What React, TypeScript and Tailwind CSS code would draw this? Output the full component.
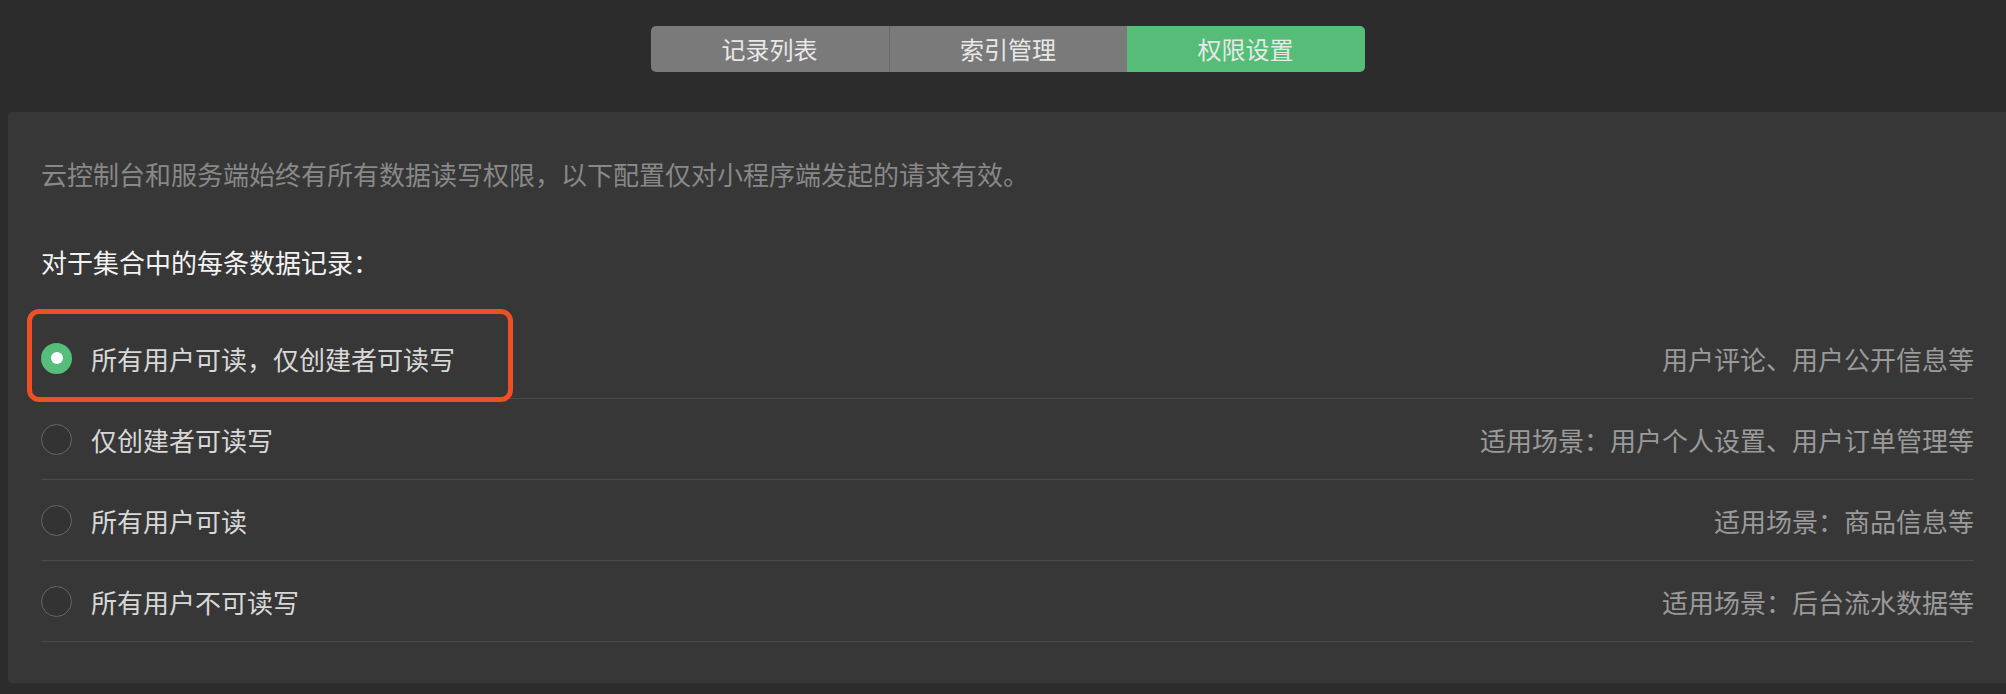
import React from 'react'

const tabs = [
  { label: '记录列表', active: false },
  { label: '索引管理', active: false },
  { label: '权限设置', active: true },
]

const options = [
  { label: '所有用户可读，仅创建者可读写', hint: '用户评论、用户公开信息等', checked: true },
  { label: '仅创建者可读写', hint: '适用场景：用户个人设置、用户订单管理等', checked: false },
  { label: '所有用户可读', hint: '适用场景：商品信息等', checked: false },
  { label: '所有用户不可读写', hint: '适用场景：后台流水数据等', checked: false },
]

function Radio({ checked }: { checked: boolean }) {
  if (checked) {
    return (
      <span className="flex h-[31px] w-[31px] shrink-0 items-center justify-center rounded-full bg-[#56bd7b]">
        <span className="h-[12px] w-[12px] rounded-full bg-white" />
      </span>
    )
  }
  return <span className="h-[31px] w-[31px] shrink-0 rounded-full border-[1.5px] border-[#666666] bg-[#333333]" />
}

export default function App() {
  return (
    <div
      className="flex h-[694px] w-full flex-col overflow-hidden bg-[#2c2c2c]"
      style={{ fontFamily: '"Noto Sans CJK SC", "Noto Sans", sans-serif' }}
    >
      {/* tab switcher */}
      <div className="flex justify-center pl-[9px] pt-[26px]">
        <div className="flex h-[46px] overflow-hidden rounded-[5px]">
          {tabs.map((t, i) => (
            <div
              key={t.label}
              className={
                'flex w-[238px] items-center justify-center text-[24px] text-[#e8e8e8] ' +
                (t.active ? 'bg-[#56bd79]' : 'bg-[#7a7a7a]') +
                (i > 0 && !t.active ? ' border-l border-[#686868]' : '')
              }
            >
              {t.label}
            </div>
          ))}
        </div>
      </div>

      {/* panel */}
      <div className="ml-[8px] mt-[40px] rounded-l-[4px] bg-[#373737] pb-[41px] pl-[33px] pr-[32px] pt-[44px]">
        <p className="text-[26px] leading-[36px] text-[#888888]">
          云控制台和服务端始终有所有数据读写权限，以下配置仅对小程序端发起的请求有效。
        </p>
        <p className="mt-[52px] text-[26px] leading-[36px] text-[#f2f2f2]">对于集合中的每条数据记录：</p>

        <div className="mt-[38px]">
          {options.map((o) => (
            <div
              key={o.label}
              className="relative flex h-[81px] items-center justify-between border-b border-[#4a4a4a]"
            >
              <div className="flex items-center gap-[19px]">
                <Radio checked={o.checked} />
                <span className="text-[26px] text-[#d8d8d8]">{o.label}</span>
              </div>
              <span className="text-[26px] text-[#9a9a9a]">{o.hint}</span>
              {o.checked && (
                <div className="pointer-events-none absolute left-[-14px] top-[-9px] h-[93px] w-[486px] rounded-[12px] border-[5px] border-[#ee4f24]" />
              )}
            </div>
          ))}
        </div>
      </div>
    </div>
  )
}
